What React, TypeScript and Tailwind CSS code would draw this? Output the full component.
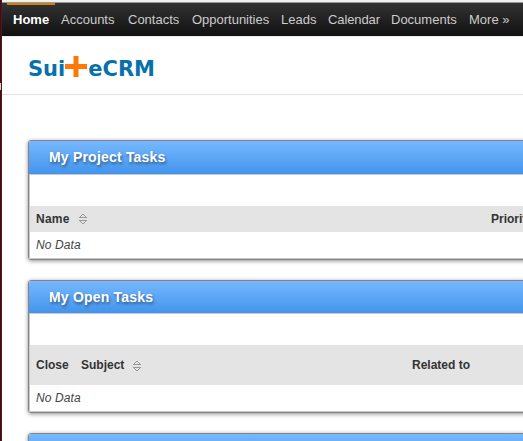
import type { ReactNode } from 'react';

const links = [
  { label: 'Accounts', box: 'w-[67px]' },
  { label: 'Contacts', box: 'w-[64px]' },
  { label: 'Opportunities', box: 'w-[89px] tracking-[-0.01px]' },
  { label: 'Leads', box: 'w-[47px]' },
  { label: 'Calendar', box: 'w-[63px] tracking-[-0.1px]' },
  { label: 'Documents', box: 'w-[78px]' },
  { label: 'More »', box: 'w-[50px]' },
];

function SortIcon() {
  return (
    <svg width="8" height="10" viewBox="0 0 8 10" fill="none" shapeRendering="crispEdges" stroke="#999">
      <path d="M3 .5h2M2 1.5h1M5 1.5h1M1 2.5h1M6 2.5h1M0 3.5h8M0 6.5h8M1 7.5h1M6 7.5h1M2 8.5h1M5 8.5h1M3 9.5h2" />
    </svg>
  );
}

function Dashlet({ header, children }: { header: ReactNode; children?: ReactNode }) {
  return (
    <section className="w-[520px] rounded-[3px] border border-[#858585] bg-white shadow-[0_1px_4px_rgba(0,0,0,0.45)]">
      {header}
      <div className="border-b border-l border-[#c8c8c8] pt-[31px]">{children}</div>
    </section>
  );
}

function DashletHeader({ title, size }: { title?: string; size: string }) {
  return (
    <h2
      className={`${size} rounded-t-[2px] border-b border-[#c8c8c8] bg-linear-to-b from-[#76b8ff] to-[#4294ed] pl-5 text-[14px] leading-[32px] font-bold tracking-[0.2px] text-white [text-shadow:1px_2px_3px_rgba(0,0,0,0.45)]`}
    >
      {title}
    </h2>
  );
}

function NoData() {
  return (
    <p className="h-[26px] pl-1.5 text-[12px] leading-[26px] tracking-[0.1px] text-[#444] italic">No Data</p>
  );
}

export default function App() {
  return (
    <div className="flex h-[441px] w-[523px] overflow-hidden bg-white font-['Liberation_Sans',Arial,sans-serif] text-[#333]">
      <div className="h-full w-[2px] shrink-0 bg-linear-to-r from-[#3a0a14] to-[#5a1824] pt-[83px]">
        <div className="h-[7px] w-px bg-[#d5d0d2]" />
      </div>
      <div className="w-[521px] shrink-0">
        <div className="h-[3px] border-b border-[#999] bg-[#f0f0f0]" />
        <nav className="flex h-[33px] bg-linear-to-b from-[#333] to-[#111] pl-[5px] text-[13px] leading-[33px] whitespace-nowrap text-[#ccc]">
          <a className="mr-1.5 h-full w-12 border-t-2 border-[#d0830b] pl-1.5 leading-[29px] font-bold text-white">
            Home
          </a>
          {links.map((link) => (
            <a key={link.label} className={link.box}>
              {link.label}
            </a>
          ))}
        </nav>
        <header className="h-[59px] border-t border-b border-t-[#eee] border-b-[#e0e0e0] pt-[19px] pl-[26px]">
          <div className="flex font-['DejaVu_Sans',sans-serif] text-[21px] leading-[26px] font-bold text-[#0870aa]">
            <span>Sui</span>
            <svg className="mr-px" width="22" height="22" viewBox="0 0 22 22">
              <path d="M8.5 0h5v8H22v5h-8.500v8h-5v-8H0V8h8.500z" fill="#ff7808" />
            </svg>
            <span>eCRM</span>
          </div>
        </header>
        <main className="flex flex-col gap-5 pt-[45px] pl-[26px] text-[12px]">
          <Dashlet header={<DashletHeader title="My Project Tasks" size="h-[34px]" />}>
            <div className="flex h-[26px] items-center bg-[#e4e4e4] pl-1.5 font-bold">
              <div className="flex w-[455px] items-center">
                <span className="w-[43px] tracking-[0.25px]">Name</span>
                <SortIcon />
              </div>
              <span>Priority</span>
            </div>
            <NoData />
          </Dashlet>
          <Dashlet header={<DashletHeader title="My Open Tasks" size="h-[33px]" />}>
            <div className="flex h-10 items-center bg-[#e4e4e4] pl-1.5 font-bold">
              <span className="w-[45px]">Close</span>
              <div className="flex w-[331px] items-center">
                <span className="w-[52px]">Subject</span>
                <div className="pt-[2px]">
                  <SortIcon />
                </div>
              </div>
              <span>Related to</span>
            </div>
            <NoData />
          </Dashlet>
          <Dashlet header={<DashletHeader size="h-[34px]" />} />
        </main>
      </div>
    </div>
  );
}
